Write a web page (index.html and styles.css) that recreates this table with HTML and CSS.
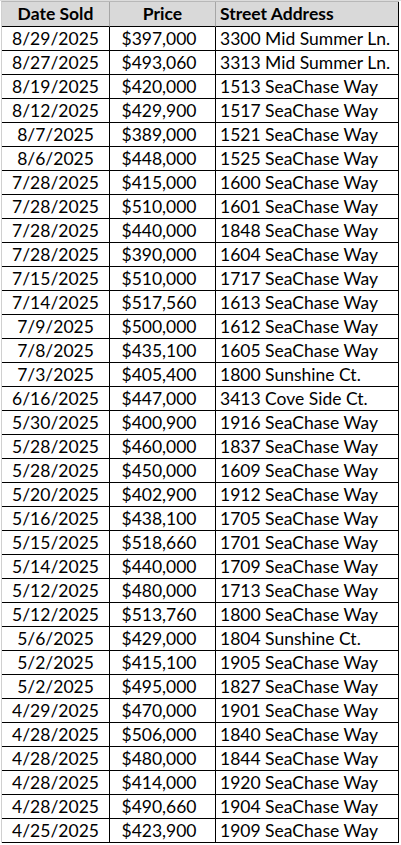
FILE: index.html
```html
<!DOCTYPE html>
<html>
<head>
<meta charset="utf-8">
<link rel="stylesheet" href="styles.css">
</head>
<body>
<div class="sheet">
  <div class="row head">
    <div class="c date">Date Sold</div>
    <div class="c price">Price</div>
    <div class="c addr">Street Address</div>
  </div>
  <div class="row"><div class="c date">8/29/2025</div><div class="c price">$397,000</div><div class="c addr">3300 Mid Summer Ln.</div></div>
  <div class="row"><div class="c date">8/27/2025</div><div class="c price">$493,060</div><div class="c addr">3313 Mid Summer Ln.</div></div>
  <div class="row"><div class="c date">8/19/2025</div><div class="c price">$420,000</div><div class="c addr">1513 SeaChase Way</div></div>
  <div class="row"><div class="c date">8/12/2025</div><div class="c price">$429,900</div><div class="c addr">1517 SeaChase Way</div></div>
  <div class="row"><div class="c date">8/7/2025</div><div class="c price">$389,000</div><div class="c addr">1521 SeaChase Way</div></div>
  <div class="row"><div class="c date">8/6/2025</div><div class="c price">$448,000</div><div class="c addr">1525 SeaChase Way</div></div>
  <div class="row"><div class="c date">7/28/2025</div><div class="c price">$415,000</div><div class="c addr">1600 SeaChase Way</div></div>
  <div class="row"><div class="c date">7/28/2025</div><div class="c price">$510,000</div><div class="c addr">1601 SeaChase Way</div></div>
  <div class="row"><div class="c date">7/28/2025</div><div class="c price">$440,000</div><div class="c addr">1848 SeaChase Way</div></div>
  <div class="row"><div class="c date">7/28/2025</div><div class="c price">$390,000</div><div class="c addr">1604 SeaChase Way</div></div>
  <div class="row"><div class="c date">7/15/2025</div><div class="c price">$510,000</div><div class="c addr">1717 SeaChase Way</div></div>
  <div class="row"><div class="c date">7/14/2025</div><div class="c price">$517,560</div><div class="c addr">1613 SeaChase Way</div></div>
  <div class="row"><div class="c date">7/9/2025</div><div class="c price">$500,000</div><div class="c addr">1612 SeaChase Way</div></div>
  <div class="row"><div class="c date">7/8/2025</div><div class="c price">$435,100</div><div class="c addr">1605 SeaChase Way</div></div>
  <div class="row"><div class="c date">7/3/2025</div><div class="c price">$405,400</div><div class="c addr">1800 Sunshine Ct.</div></div>
  <div class="row"><div class="c date">6/16/2025</div><div class="c price">$447,000</div><div class="c addr">3413 Cove Side Ct.</div></div>
  <div class="row"><div class="c date">5/30/2025</div><div class="c price">$400,900</div><div class="c addr">1916 SeaChase Way</div></div>
  <div class="row"><div class="c date">5/28/2025</div><div class="c price">$460,000</div><div class="c addr">1837 SeaChase Way</div></div>
  <div class="row"><div class="c date">5/28/2025</div><div class="c price">$450,000</div><div class="c addr">1609 SeaChase Way</div></div>
  <div class="row"><div class="c date">5/20/2025</div><div class="c price">$402,900</div><div class="c addr">1912 SeaChase Way</div></div>
  <div class="row"><div class="c date">5/16/2025</div><div class="c price">$438,100</div><div class="c addr">1705 SeaChase Way</div></div>
  <div class="row"><div class="c date">5/15/2025</div><div class="c price">$518,660</div><div class="c addr">1701 SeaChase Way</div></div>
  <div class="row"><div class="c date">5/14/2025</div><div class="c price">$440,000</div><div class="c addr">1709 SeaChase Way</div></div>
  <div class="row"><div class="c date">5/12/2025</div><div class="c price">$480,000</div><div class="c addr">1713 SeaChase Way</div></div>
  <div class="row"><div class="c date">5/12/2025</div><div class="c price">$513,760</div><div class="c addr">1800 SeaChase Way</div></div>
  <div class="row"><div class="c date">5/6/2025</div><div class="c price">$429,000</div><div class="c addr">1804 Sunshine Ct.</div></div>
  <div class="row"><div class="c date">5/2/2025</div><div class="c price">$415,100</div><div class="c addr">1905 SeaChase Way</div></div>
  <div class="row"><div class="c date">5/2/2025</div><div class="c price">$495,000</div><div class="c addr">1827 SeaChase Way</div></div>
  <div class="row"><div class="c date">4/29/2025</div><div class="c price">$470,000</div><div class="c addr">1901 SeaChase Way</div></div>
  <div class="row"><div class="c date">4/28/2025</div><div class="c price">$506,000</div><div class="c addr">1840 SeaChase Way</div></div>
  <div class="row"><div class="c date">4/28/2025</div><div class="c price">$480,000</div><div class="c addr">1844 SeaChase Way</div></div>
  <div class="row"><div class="c date">4/28/2025</div><div class="c price">$414,000</div><div class="c addr">1920 SeaChase Way</div></div>
  <div class="row"><div class="c date">4/28/2025</div><div class="c price">$490,660</div><div class="c addr">1904 SeaChase Way</div></div>
  <div class="row"><div class="c date">4/25/2025</div><div class="c price">$423,900</div><div class="c addr">1909 SeaChase Way</div></div>
</div>
</body>
</html>
```

FILE: styles.css
```css
html, body {
  margin: 0;
  padding: 0;
  background: #ffffff;
}

body {
  border-top: 1px solid #dcdcdc;
  font-family: Lato, "Liberation Sans", Arial, sans-serif;
  font-size: 17.5px;
  color: #000;
}

.sheet {
  margin-left: 1px;
  width: 398px;
  border-left: 1px solid #d0d0d0;
  border-top: 1px solid #b8b8b8;
  box-sizing: border-box;
}

.row {
  display: grid;
  grid-template-columns: 108px 106px 183px;
  height: 24px;
}

.c {
  box-sizing: border-box;
  border-right: 1px solid #000;
  border-bottom: 1px solid #000;
  line-height: 23px;
  white-space: nowrap;
  overflow: hidden;
}

.date {
  text-align: center;
}

.price {
  text-align: center;
  padding-right: 7px;
}

.addr {
  text-align: left;
  padding-left: 4px;
}

.head {
  height: 25px;
  background: #d9d9d9;
  font-weight: bold;
}

.head .c {
  line-height: 24px;
  border-right-color: #a6a6a6;
}

.head .addr {
  border-right-color: #000;
}

.head .price {
  padding-right: 0;
}
```
